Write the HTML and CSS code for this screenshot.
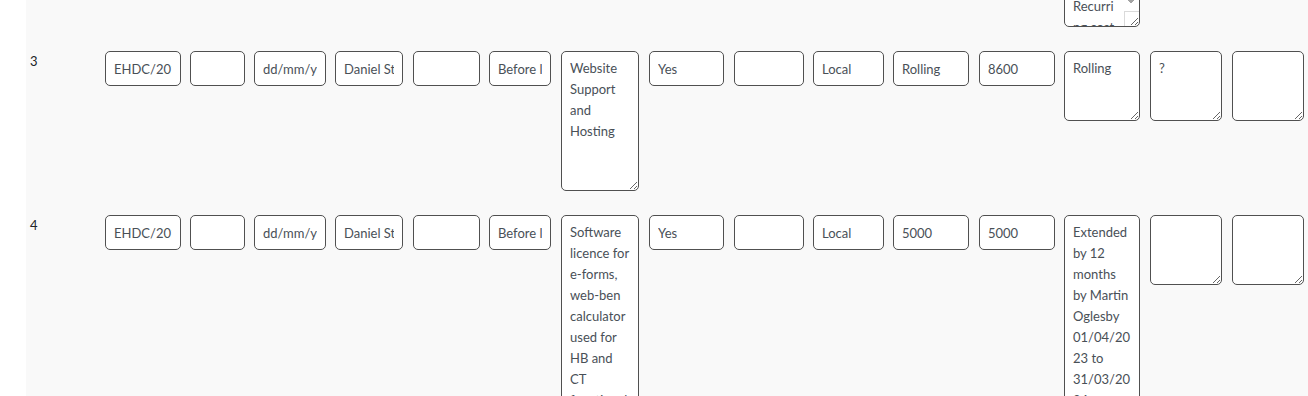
FILE: index.html
```html
<!DOCTYPE html>
<html lang="en">
<head>
<meta charset="utf-8">
<title>Contracts register</title>
<link rel="stylesheet" href="styles.css">
</head>
<body>
<div class="sheet">
  <div class="row">
    <div class="num">2</div>
    <div class="cell"><input class="field" value="EHDC/2019/002"></div>
    <div class="cell"><input class="field" value=""></div>
    <div class="cell"><input class="field" placeholder="dd/mm/yyyy"></div>
    <div class="cell"><input class="field" value="Daniel Stevens"></div>
    <div class="cell"><input class="field" value=""></div>
    <div class="cell"><input class="field" value="Before launch"></div>
    <div class="cell"><textarea class="field h-short">Hosting</textarea></div>
    <div class="cell"><input class="field" value="Yes"></div>
    <div class="cell"><input class="field" value=""></div>
    <div class="cell"><input class="field" value="Local"></div>
    <div class="cell"><input class="field" value="Rolling"></div>
    <div class="cell"><input class="field" value="4200"></div>
    <div class="cell"><textarea class="field h-prev scroll">Paid
yearly
as a
fixed
fee on
Recurring cost</textarea></div>
    <div class="cell"><textarea class="field h-short"></textarea></div>
    <div class="cell"><textarea class="field h-short"></textarea></div>
  </div>

  <div class="row">
    <div class="num">3</div>
    <div class="cell"><input class="field" value="EHDC/2019/003"></div>
    <div class="cell"><input class="field" value=""></div>
    <div class="cell"><input class="field" placeholder="dd/mm/yyyy"></div>
    <div class="cell"><input class="field" value="Daniel Stevens"></div>
    <div class="cell"><input class="field" value=""></div>
    <div class="cell"><input class="field" value="Before launch"></div>
    <div class="cell"><textarea class="field h-mid">Website Support and Hosting</textarea></div>
    <div class="cell"><input class="field" value="Yes"></div>
    <div class="cell"><input class="field" value=""></div>
    <div class="cell"><input class="field" value="Local"></div>
    <div class="cell"><input class="field" value="Rolling"></div>
    <div class="cell"><input class="field" value="8600"></div>
    <div class="cell"><textarea class="field h-short">Rolling</textarea></div>
    <div class="cell"><textarea class="field h-short">?</textarea></div>
    <div class="cell"><textarea class="field h-short"></textarea></div>
  </div>

  <div class="row">
    <div class="num">4</div>
    <div class="cell"><input class="field" value="EHDC/2019/004"></div>
    <div class="cell"><input class="field" value=""></div>
    <div class="cell"><input class="field" placeholder="dd/mm/yyyy"></div>
    <div class="cell"><input class="field" value="Daniel Stevens"></div>
    <div class="cell"><input class="field" value=""></div>
    <div class="cell"><input class="field" value="Before launch"></div>
    <div class="cell"><textarea class="field h-tall">Software licence for e-forms, web-ben calculator used for HB and CT functionality</textarea></div>
    <div class="cell"><input class="field" value="Yes"></div>
    <div class="cell"><input class="field" value=""></div>
    <div class="cell"><input class="field" value="Local"></div>
    <div class="cell"><input class="field" value="5000"></div>
    <div class="cell"><input class="field" value="5000"></div>
    <div class="cell"><textarea class="field h-tall">Extended by 12 months by Martin Oglesby 01/04/2023 to 31/03/2024</textarea></div>
    <div class="cell"><textarea class="field h-short"></textarea></div>
    <div class="cell"><textarea class="field h-short"></textarea></div>
  </div>
</div>
</body>
</html>
```

FILE: styles.css
```css
html, body {
  margin: 0;
  padding: 0;
  overflow: hidden;
  background: #ffffff;
}

body {
  font-family: Lato, "Open Sans", sans-serif;
  color: #212529;
}

.sheet {
  margin: -128px 0 0 26px;
  background: #f9f9f9;
}

.row {
  display: grid;
  grid-template-columns: 79px 85px 64px 81px 78px 76px 72px 88px 85px 79px 80px 86px 85px 86px 82px 82px;
  align-items: start;
  padding: 12px 0;
}

.num {
  padding-left: 4px;
  font-size: 13px;
  line-height: 20px;
  color: #212529;
}

.field {
  display: block;
  box-sizing: border-box;
  margin: 0;
  height: 35px;
  padding: 6px 8px;
  font-family: Lato, "Open Sans", sans-serif;
  font-size: 13px;
  line-height: 21px;
  color: #495057;
  background: #ffffff;
  border: 1px solid #505050;
  border-radius: 5px;
  outline: none;
}

.field::placeholder {
  color: #495057;
  opacity: 1;
}

.h-short { height: 70px; }
.h-mid { height: 140px; }
.h-prev { height: 143px; }
.h-tall { height: 232px; }

/* textarea whose content overflows: room for a vertical scrollbar,
   with its down arrow and the corner square above the resize grip */
.scroll {
  padding-right: 23px;
  background-color: #ffffff;
  background-image:
    linear-gradient(to top right, transparent 50%, #a3a3a3 50%),
    linear-gradient(to top left, transparent 50%, #a3a3a3 50%),
    linear-gradient(#dadada, #dadada),
    linear-gradient(#dadada, #dadada);
  background-size: 4px 5px, 4px 5px, 15px 1px, 1px 15px;
  background-position:
    right 8px bottom 22px,
    right 4px bottom 22px,
    right 0 bottom 14px,
    right 14px bottom 0;
  background-repeat: no-repeat;
}

.row > :nth-child(2) .field { width: 76px; }
.row > :nth-child(3) .field { width: 55px; }
.row > :nth-child(4) .field { width: 72px; }
.row > :nth-child(5) .field { width: 68px; }
.row > :nth-child(6) .field { width: 67px; }
.row > :nth-child(7) .field { width: 62px; }
.row > :nth-child(8) .field { width: 78px; }
.row > :nth-child(9) .field { width: 75px; }
.row > :nth-child(10) .field { width: 70px; }
.row > :nth-child(11) .field { width: 71px; }
.row > :nth-child(12) .field { width: 76px; }
.row > :nth-child(13) .field { width: 76px; }
.row > :nth-child(14) .field { width: 76px; }
.row > :nth-child(15) .field { width: 72px; }
.row > :nth-child(16) .field { width: 72px; }
```
